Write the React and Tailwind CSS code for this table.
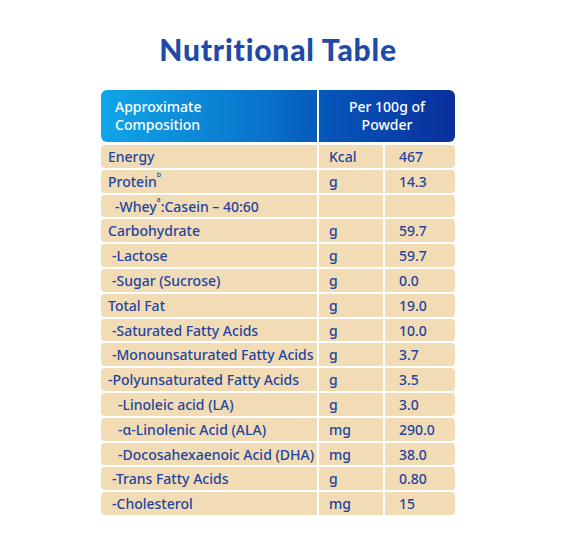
import React from 'react'

// rows of the nutrition table: label, indent (px), unit, value
const rows = [
  { label: 'Energy', pad: 'pl-[7px]', unit: 'Kcal', value: '467' },
  { label: <>Protein<sup className="text-[7px] align-[6px]">b</sup></>, pad: 'pl-[7px]', unit: 'g', value: '14.3' },
  { label: <>-Whey<sup className="text-[7px] align-[6px]">a</sup>:Casein – 40:60</>, pad: 'pl-[14px]', unit: '', value: '' },
  { label: 'Carbohydrate', pad: 'pl-[7px]', unit: 'g', value: '59.7' },
  { label: '-Lactose', pad: 'pl-[11px]', unit: 'g', value: '59.7' },
  { label: '-Sugar (Sucrose)', pad: 'pl-[11px]', unit: 'g', value: '0.0' },
  { label: 'Total Fat', pad: 'pl-[7px]', unit: 'g', value: '19.0' },
  { label: '-Saturated Fatty Acids', pad: 'pl-[11px]', unit: 'g', value: '10.0' },
  { label: '-Monounsaturated Fatty Acids', pad: 'pl-[11px]', unit: 'g', value: '3.7' },
  { label: '-Polyunsaturated Fatty Acids', pad: 'pl-[7px]', unit: 'g', value: '3.5' },
  { label: '-Linoleic acid (LA)', pad: 'pl-[17px]', unit: 'g', value: '3.0' },
  { label: '-α-Linolenic Acid (ALA)', pad: 'pl-[17px]', unit: 'mg', value: '290.0' },
  { label: '-Docosahexaenoic Acid (DHA)', pad: 'pl-[17px]', unit: 'mg', value: '38.0' },
  { label: '-Trans Fatty Acids', pad: 'pl-[11px]', unit: 'g', value: '0.80' },
  { label: '-Cholesterol', pad: 'pl-[11px]', unit: 'mg', value: '15' },
]

export default function App() {
  return (
    <div className="min-h-[549px] bg-white pt-[33px] pl-[101px] font-['Noto_Sans',sans-serif]">
      <div className="w-[354px]">
        <h1 className="text-center text-[30px] leading-[32px] font-black text-[#1f4aa6] font-['Lato',sans-serif] tracking-[0.8px]">
          Nutritional Table
        </h1>

        {/* header */}
        <div className="mt-[25px] flex h-[52px] rounded-[6px] overflow-hidden bg-[linear-gradient(90deg,#0fa6e8_0%,#0a74cc_45%,#0658bb_62%,#0a2f9c_100%)] text-white text-[14px] font-medium leading-[18px]">
          <div className="w-[216px] flex items-center pl-[14px]">
            Approximate
            <br />
            Composition
          </div>
          <div className="w-[2px] bg-white" />
          <div className="flex-1 flex items-center justify-center text-center">
            Per 100g of
            <br />
            Powder
          </div>
        </div>

        {/* rows */}
        <div className="mt-[3px] flex flex-col gap-[2px]">
          {rows.map((r, i) => (
            <div key={i} className="flex h-[22.8px] gap-[2px] text-[14px] font-medium text-[#2444a0] leading-[24px]">
              <div className={`w-[216px] rounded-l-[4px] bg-[#f1dcb5] whitespace-nowrap ${r.pad}`}>{r.label}</div>
              <div className="w-[64px] bg-[#f1dcb5] pl-[10px]">{r.unit}</div>
              <div className="flex-1 rounded-r-[4px] bg-[#f1dcb5] pl-[14px]">{r.value}</div>
            </div>
          ))}
        </div>
      </div>
    </div>
  )
}
